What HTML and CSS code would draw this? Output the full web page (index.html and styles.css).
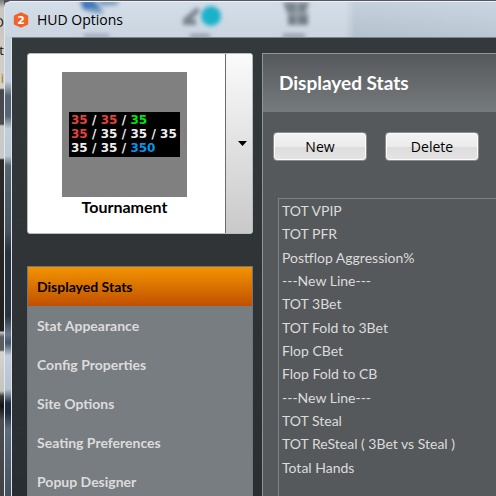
FILE: index.html
```html
<!DOCTYPE html>
<html lang="en">
<head>
  <meta charset="UTF-8">
  <meta name="viewport" content="width=device-width, initial-scale=1">
  <title>HUD Options</title>
  <link rel="stylesheet" href="styles.css">
</head>
<body>

  <div class="desktop">
    <span>D</span>
    <span>t</span>
    <span class="gold">i</span>
  </div>

  <div class="window">
    <header class="titlebar">
      <!-- Blurred desktop showing through the glass -->
      <svg class="glass" width="492" height="35" viewBox="0 0 492 35" aria-hidden="true">
        <defs>
          <filter id="soft" x="-30%" y="-30%" width="160%" height="160%">
            <feGaussianBlur stdDeviation="2"/>
          </filter>
        </defs>
        <g filter="url(#soft)">
          <path d="M75 -2h14l7 9-5 4-13-4z" fill="#3d79b8"/>
          <path d="M92 -2h22l-2 5-16 1z" fill="#7d9cbb"/>
          <path d="M84 8l14 2" stroke="#7f9fc2" stroke-width="4"/>
          <path d="M79 34h25" stroke="#8795a5" stroke-width="3"/>
          <path d="M178 23v-6l14-12 3 4-9 9 5-1v6z" fill="#7a838d"/>
          <path d="M185 34h20" stroke="#7b8691" stroke-width="3"/>
          <circle cx="206" cy="14" r="10" fill="#1fb1cb"/>
          <path d="M278 0h26l-3 11h-19z" fill="#7c858e"/>
          <path d="M283 13h20v10h-20z" fill="#737c86"/>
          <path d="M292 0v24M282 12h22" stroke="#a3adb8" stroke-width="2"/>
          <path d="M278 34h22" stroke="#8a96a2" stroke-width="4"/>
        </g>
      </svg>
      <svg class="app-icon" width="16" height="16" viewBox="0 0 16 16" aria-hidden="true">
        <path d="M8 .3l6.2 2.600q1 .5 1 1.500v7.200q0 1-1 1.500L8 15.700l-6.200-2.600q-1-.5-1-1.500V4.400q0-1 1-1.500z" fill="#f2632a"/>
        <text x="8" y="12" text-anchor="middle">2</text>
      </svg>
      <h1>HUD Options</h1>
    </header>

    <div class="client">
      <aside class="sidebar">
        <div class="picker">
          <div class="preview">
            <div class="hud">
              <p><b class="red">35</b><i>/</i><b class="red">35</b><i>/</i><b class="green">35</b></p>
              <p><b class="red">35</b><i>/</i><b>35</b><i>/</i><b>35</b><i>/</i><b>35</b></p>
              <p><b>35</b><i>/</i><b>35</b><i>/</i><b class="blue">350</b></p>
            </div>
          </div>
          <div class="toggle">
            <svg width="9" height="5" viewBox="0 0 9 5" aria-hidden="true"><path d="M0 0h9L4.500 5z"/></svg>
          </div>
          <select class="profile" aria-label="HUD profile">
            <option>Tournament</option>
          </select>
        </div>

        <nav class="menu">
          <a class="active" href="#displayed">Displayed Stats</a>
          <a href="#appearance">Stat Appearance</a>
          <a href="#config">Config Properties</a>
          <a href="#site">Site Options</a>
          <a href="#seating">Seating Preferences</a>
          <a href="#popup">Popup Designer</a>
        </nav>
      </aside>

      <main class="panel" id="displayed">
        <h2>Displayed Stats</h2>
        <div class="actions">
          <button type="button">New</button>
          <button type="button">Delete</button>
        </div>
        <select class="stats" multiple aria-label="Displayed stats">
          <option>TOT VPIP</option>
          <option>TOT PFR</option>
          <option>Postflop Aggression%</option>
          <option>---New Line---</option>
          <option>TOT 3Bet</option>
          <option>TOT Fold to 3Bet</option>
          <option>Flop CBet</option>
          <option>Flop Fold to CB</option>
          <option>---New Line---</option>
          <option>TOT Steal</option>
          <option>TOT ReSteal ( 3Bet vs Steal )</option>
          <option>Total Hands</option>
        </select>
      </main>
    </div>
  </div>

</body>
</html>
```

FILE: styles.css
```css
* {
  box-sizing: border-box;
}

body {
  margin: 0;
  height: 100vh;
  display: flex;
  overflow: hidden;
  font-family: "Open Sans", "Segoe UI", sans-serif;
  background: #4c4f55;
}

/* Sliver of the desktop left of the window */
.desktop {
  width: 4px;
  flex: none;
  display: flex;
  flex-direction: column;
  align-items: flex-end;
  padding-top: 8px;
  overflow: hidden;
  font-size: 13px;
  line-height: 28px;
  color: #111;
  background: linear-gradient(#77797c 0, #c9c5bf 8px, #d5d1c9 88px, #45474a 90px, #4a4b4e 124px, #c9c9c7 126px, #c9c9c7 158px, #2b2a28 160px, #22211f 331px, #c8c8c8 332px, #5a5c5e 337px, #5a5c5e 350px, #d4d3ce 352px, #c4c3be 391px, #3b3b3b 396px, #111 406px, #4c4d4f 420px, #414244 100%);
}

.gold {
  color: #b07a1c;
}

/* The gradient is the glass frame on the left edge */
.window {
  flex: 1;
  min-width: 0;
  display: flex;
  flex-direction: column;
  border-top: 1px solid #555863;
  border-left: 1px solid #dfe6ed;
  border-top-left-radius: 7px;
  overflow: hidden;
  background: linear-gradient(#c4d0dc 0, #c4d0dc 80px, #566374 95px, #566374 115px, #c3d0db 128px, #bcc8d2 155px, #566370 165px, #46525e 230px, #27343f 250px, #27343f 315px, #6b7a8c 333px, #44546a 342px, #c3cfda 355px, #b6c3cf 388px, #1f2c3d 402px, #1f2c3d 412px, #5c6c7c 428px, #44505f 100%);
}

.titlebar {
  position: relative;
  flex: none;
  height: 36px;
  display: flex;
  align-items: center;
  gap: 8px;
  padding-left: 8px;
  border-top: 1px solid #eef3f8;
  border-top-left-radius: 6px;
  background: linear-gradient(90deg, rgba(214, 224, 235, .6) 0, rgba(214, 224, 235, .6) 340px, rgba(170, 185, 198, .3) 350px, rgba(190, 203, 216, .3) 100%), linear-gradient(#d0dae5, #b9c5d0);
}

.glass {
  position: absolute;
  top: 0;
  left: 0;
}

.app-icon {
  position: relative;
}

.app-icon text {
  font: bold 11px "DejaVu Sans", sans-serif;
  fill: #fff;
}

.titlebar h1 {
  position: relative;
  margin: 0;
  font-size: 14px;
  line-height: 20px;
  font-weight: normal;
  color: #000;
}

.client {
  flex: 1;
  min-height: 0;
  display: flex;
  gap: 9px;
  padding: 15px 0 0 15px;
  margin-left: 6px;
  border-top: 1px solid #7b848c;
  border-left: 1px solid #dfe6ed;
  background: linear-gradient(#34393c, #2a2e31);
}

.sidebar {
  flex: none;
  width: 226px;
  display: flex;
  flex-direction: column;
  gap: 32px;
}

.picker {
  flex: none;
  display: grid;
  grid-template-columns: 1fr 27px;
  height: 181px;
  border: 1px solid #b9bcbd;
  border-radius: 3px;
  overflow: hidden;
  background: #fff;
}

.preview {
  grid-area: 1 / 1;
  justify-self: center;
  width: 125px;
  height: 125px;
  margin-top: 18px;
  margin-right: 4px;
  display: flex;
  align-items: center;
  justify-content: center;
  background: #808080;
}

.hud {
  padding: 1px 2px 2px;
  width: 111px;
  background: #000;
  color: #eee;
  font: 12px/14px "DejaVu Sans", sans-serif;
  white-space: nowrap;
}

.hud p {
  display: flex;
  margin: 0;
}

.hud b {
  font-weight: bold;
}

.hud i {
  width: 13px;
  text-align: center;
  font-style: normal;
  font-weight: bold;
}

.red {
  color: #e8403c;
}

.green {
  color: #00e613;
}

.blue {
  color: #0a93e6;
}

.toggle {
  grid-area: 1 / 2;
  display: flex;
  align-items: center;
  justify-content: center;
  padding-left: 6px;
  border-left: 1px solid #6b6b6b;
  background: linear-gradient(#fbfbfb, #c9c9c9);
}

.profile {
  grid-area: 1 / 1 / 2 / 3;
  z-index: 1;
  appearance: none;
  padding: 127px 31px 0 0;
  border: 0;
  background: transparent;
  color: #000;
  font: bold 16px/20px Lato, Calibri, sans-serif;
  text-align: center;
  text-align-last: center;
}

.menu {
  flex: 1;
  border: 1px solid #6d7780;
  border-bottom: 0;
  background: #787d81;
}

.menu a {
  display: block;
  padding-left: 9px;
  font: bold 14px/39px Lato, Calibri, sans-serif;
  color: #dcdcdc;
  text-decoration: none;
}

.menu .active {
  color: #000;
  background: linear-gradient(#f29400, #c15000);
}

.panel {
  flex: 1;
  min-width: 0;
  display: flex;
  flex-direction: column;
  border-top: 1px solid #919597;
  border-left: 1px solid #919597;
  background: #56595b;
}

.panel h2 {
  margin: 0;
  padding-left: 16px;
  font: bold 19px/58px Lato, Calibri, sans-serif;
  color: #fff;
  background: linear-gradient(#56595b, #767b7e);
}

.actions {
  display: flex;
  gap: 18px;
  padding: 20px 10px 37px;
}

.actions button {
  width: 94px;
  height: 29px;
  padding: 0;
  border: 1px solid #8b8e90;
  border-radius: 4px;
  box-shadow: inset 0 0 0 1px #fafafa;
  background: linear-gradient(#f4f4f4, #ebebeb 50%, #dddddd 51%, #e4e4e4);
  color: #000;
  font: 14px "Open Sans", "Segoe UI", sans-serif;
}

.stats {
  appearance: none;
  flex: 1;
  margin-left: 15px;
  padding: 0 1px;
  border: 1px solid #7f8284;
  border-width: 1px 0 0 1px;
  border-radius: 0;
  background: transparent;
  overflow: hidden;
  font: 14px Lato, Calibri, sans-serif;
  color: #dcdcdc;
}

.stats option {
  min-height: 0;
  padding: 3px 2px;
}

.stats option:nth-child(3n) {
  padding-top: 4px;
}
```
